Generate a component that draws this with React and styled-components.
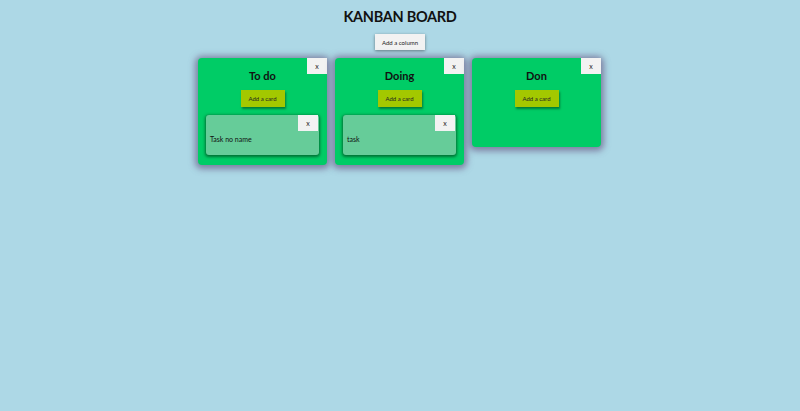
import React from "react";
import styled, { createGlobalStyle } from "styled-components";

const Global = createGlobalStyle`
  html, body { margin: 0; padding: 0; background: #add8e6; }
  body { font-family: Lato, "Open Sans", sans-serif; color: #111; }
`;

const Page = styled.div`
  display: flex;
  flex-direction: column;
  align-items: center;
  padding-top: 8px;
  min-height: 411px;
  box-sizing: border-box;
`;

const Title = styled.h1`
  margin: 0 0 8px;
  font-size: 14.5px;
  line-height: 18px;
  font-weight: 700;
  letter-spacing: -0.3px;
  color: #111;
`;

const AddColumnButton = styled.button`
  width: 50px;
  height: 16px;
  padding: 0;
  border: none;
  background: #f2f2f2;
  font-family: Lato, sans-serif;
  font-size: 6px;
  color: #222;
  box-shadow: 0 1px 3px rgba(0, 0, 0, 0.45);
  margin-bottom: 8px;
`;

const Board = styled.div`
  display: flex;
  gap: 8px;
  align-items: flex-start;
  margin-right: 1px;
`;

const Column = styled.div`
  position: relative;
  width: 129px;
  min-height: 89px;
  box-sizing: border-box;
  padding: 11px 8px 10px;
  background: #00cc66;
  border-radius: 4px;
  box-shadow: 0 1px 6px 3px rgba(110, 100, 140, 0.75);
  display: flex;
  flex-direction: column;
  align-items: center;
`;

const CloseButton = styled.button`
  position: absolute;
  top: 0;
  right: ${(p) => p.$right || 0}px;
  width: 20px;
  height: 16px;
  padding: 0;
  border: none;
  background: #f2f2f2;
  font-family: Lato, sans-serif;
  font-size: 7px;
  line-height: 16px;
  color: #222;
`;

const ColumnTitle = styled.h3`
  margin: 0;
  font-size: 11px;
  line-height: 13px;
  font-weight: 700;
`;

const AddCardButton = styled.button`
  margin-top: 8px;
  width: 44px;
  height: 17px;
  padding: 0;
  border: none;
  background: #a3c800;
  font-family: Lato, sans-serif;
  font-size: 6px;
  color: #222;
  box-shadow: 1px 2px 2px rgba(0, 60, 20, 0.55);
`;

const Card = styled.div`
  position: relative;
  margin-top: 8px;
  width: 100%;
  height: 40px;
  box-sizing: border-box;
  padding: 19px 4px 0;
  background: #66cc99;
  border-radius: 3px;
  box-shadow: 0 1px 3px 1px rgba(0, 90, 40, 0.8);
  font-size: 7px;
  line-height: 10px;
  color: #111;
`;

const columns = [
  { title: "To do", cards: ["Task no name"] },
  { title: "Doing", cards: ["task"] },
  { title: "Don", cards: [] },
];

export default function App() {
  return (
    <>
      <Global />
      <Page>
        <Title>KANBAN BOARD</Title>
        <AddColumnButton>Add a column</AddColumnButton>
        <Board>
          {columns.map((col) => (
            <Column key={col.title}>
              <CloseButton>x</CloseButton>
              <ColumnTitle>{col.title}</ColumnTitle>
              <AddCardButton>Add a card</AddCardButton>
              {col.cards.map((c) => (
                <Card key={c}>
                  <CloseButton $right={1}>x</CloseButton>
                  {c}
                </Card>
              ))}
            </Column>
          ))}
        </Board>
      </Page>
    </>
  );
}
